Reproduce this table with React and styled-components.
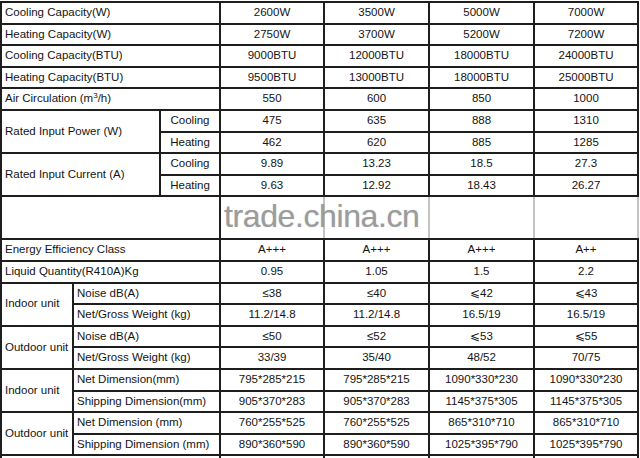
import styled, { createGlobalStyle } from 'styled-components'

const GlobalStyle = createGlobalStyle`
  html, body {
    margin: 0;
    padding: 0;
    background: #ffffff;
    overflow: hidden;
  }
  body {
    font-family: "Liberation Sans", Arial, sans-serif;
    color: #141414;
  }
`

const Sheet = styled.div`
  position: relative;
  width: 640px;
  height: 458px;
  padding-top: 1px;
  box-sizing: border-box;
  overflow: hidden;
`

const SpecTable = styled.table`
  border-collapse: collapse;
  table-layout: fixed;
  width: 637px;
  font-size: 11.5px;
`

const Row = styled.tr`
  height: ${p => (p.$tall ? '43px' : '21.6px')};
`

const Label = styled.td`
  border: 2px solid #1e1e1e;
  text-align: ${p => (p.$center ? 'center' : 'left')};
  padding: 0 0 0 ${p => (p.$center ? '0' : '3px')};
  white-space: nowrap;
  overflow: hidden;
  vertical-align: middle;
  line-height: 1;
`

const Value = styled.td`
  border: 2px solid #1e1e1e;
  text-align: center;
  padding: 0;
  white-space: nowrap;
  vertical-align: middle;
  line-height: 1;
`

const FadedValue = styled(Value)`
  border-left-color: #c4c4c4;
  border-right-color: #c4c4c4;
`

const Sup = styled.sup`
  font-size: 8px;
  line-height: 0;
  vertical-align: 4px;
`

const Watermark = styled.div`
  position: absolute;
  left: 224px;
  top: 198px;
  font-family: "Liberation Sans", Arial, sans-serif;
  font-size: 32px;
  color: #9c9c9c;
  letter-spacing: -0.4px;
  text-shadow: 0 0 1px rgba(150, 150, 150, 0.5);
  pointer-events: none;
`

const simple = [
  ['Cooling Capacity(W)', ['2600W', '3500W', '5000W', '7000W']],
  ['Heating Capacity(W)', ['2750W', '3700W', '5200W', '7200W']],
  ['Cooling Capacity(BTU)', ['9000BTU', '12000BTU', '18000BTU', '24000BTU']],
  ['Heating Capacity(BTU)', ['9500BTU', '13000BTU', '18000BTU', '25000BTU']],
  [<>Air Circulation (m<Sup>3</Sup>/h)</>, ['550', '600', '850', '1000']],
]

const rated = [
  ['Rated Input Power (W)', [
    ['Cooling', ['475', '635', '888', '1310']],
    ['Heating', ['462', '620', '885', '1285']],
  ]],
  ['Rated Input Current (A)', [
    ['Cooling', ['9.89', '13.23', '18.5', '27.3']],
    ['Heating', ['9.63', '12.92', '18.43', '26.27']],
  ]],
]

const simple2 = [
  ['Energy Efficiency Class', ['A+++', 'A+++', 'A+++', 'A++']],
  ['Liquid Quantity(R410A)Kg', ['0.95', '1.05', '1.5', '2.2']],
]

const units = [
  ['Indoor unit', [
    ['Noise dB(A)', ['\u226438', '\u226440', '\u2a7d42', '\u2a7d43']],
    ['Net/Gross Weight (kg)', ['11.2/14.8', '11.2/14.8', '16.5/19', '16.5/19']],
  ]],
  ['Outdoor unit', [
    ['Noise dB(A)', ['\u226450', '\u226452', '\u2a7d53', '\u2a7d55']],
    ['Net/Gross Weight (kg)', ['33/39', '35/40', '48/52', '70/75']],
  ]],
  ['Indoor unit', [
    ['Net Dimension(mm)', ['795*285*215', '795*285*215', '1090*330*230', '1090*330*230']],
    ['Shipping Dimension(mm)', ['905*370*283', '905*370*283', '1145*375*305', '1145*375*305']],
  ]],
  ['Outdoor unit', [
    ['Net Dimension (mm)', ['760*255*525', '760*255*525', '865*310*710', '865*310*710']],
    ['Shipping Dimension (mm)', ['890*360*590', '890*360*590', '1025*395*790', '1025*395*790']],
  ]],
]

const Values = ({ items }) => items.map((v, i) => <Value key={i}>{v}</Value>)

const GroupRows = ({ name, subs, wide }) =>
  subs.map(([sub, vals], i) => (
    <Row key={i}>
      {i === 0 && (
        <Label rowSpan={subs.length} colSpan={wide ? 2 : 1}>{name}</Label>
      )}
      <Label colSpan={wide ? 1 : 2} $center={wide}>{sub}</Label>
      <Values items={vals} />
    </Row>
  ))

const App = () => (
  <>
    <GlobalStyle />
    <Sheet>
      <SpecTable>
        <colgroup>
          <col style={{ width: 72 }} />
          <col style={{ width: 87 }} />
          <col style={{ width: 60 }} />
          <col style={{ width: 104 }} />
          <col style={{ width: 105 }} />
          <col style={{ width: 105 }} />
          <col style={{ width: 104 }} />
        </colgroup>
        <tbody>
          {simple.map(([name, vals], i) => (
            <Row key={i}>
              <Label colSpan={3}>{name}</Label>
              <Values items={vals} />
            </Row>
          ))}
          {rated.map(([name, subs], i) => (
            <GroupRows key={'r' + i} name={name} subs={subs} wide />
          ))}
          <Row $tall>
            <Label colSpan={3} />
            <FadedValue />
            <FadedValue />
            <FadedValue />
            <FadedValue />
          </Row>
          {simple2.map(([name, vals], i) => (
            <Row key={'s' + i}>
              <Label colSpan={3}>{name}</Label>
              <Values items={vals} />
            </Row>
          ))}
          {units.map(([name, subs], i) => (
            <GroupRows key={'u' + i} name={name} subs={subs} />
          ))}
          <Row>
            <Label colSpan={3} />
            <Values items={['', '', '', '']} />
          </Row>
        </tbody>
      </SpecTable>
      <Watermark>trade.china.cn</Watermark>
    </Sheet>
  </>
)

export default App
